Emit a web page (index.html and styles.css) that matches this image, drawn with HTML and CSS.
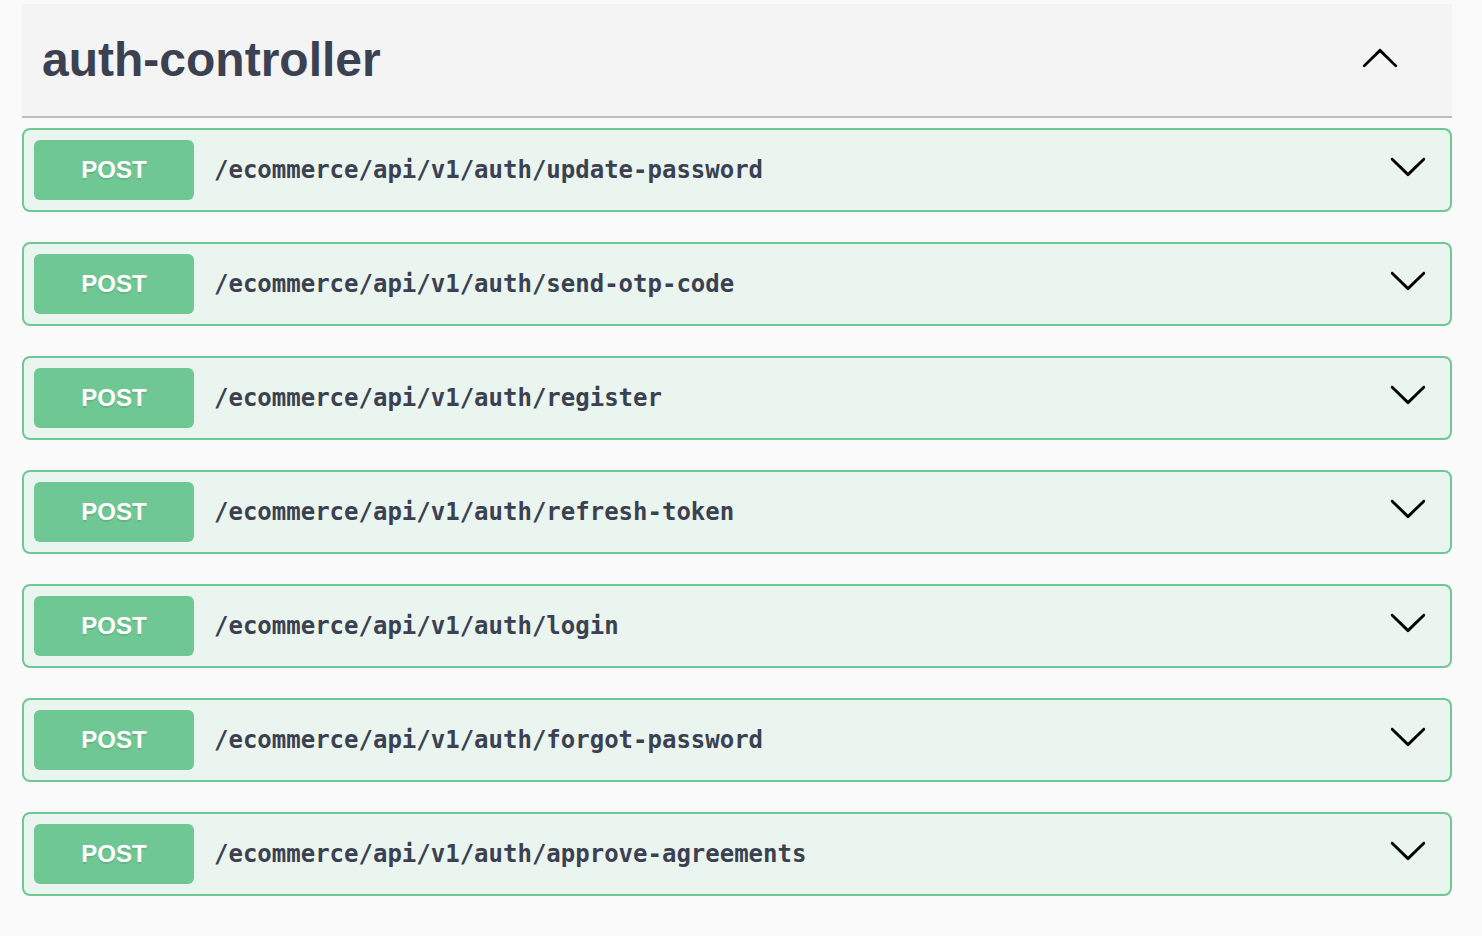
FILE: index.html
```html
<!DOCTYPE html>
<html lang="en">
<head>
<meta charset="utf-8">
<title>auth-controller</title>
<link rel="stylesheet" href="styles.css">
</head>
<body>
<section class="tag-section">
  <div class="tag-header">
    <h3 class="tag-title">auth-controller</h3>
    <svg class="arrow-up" width="40" height="40" viewBox="0 0 20 20" aria-hidden="true"><path d="M17.418 14.908c.272.268.709.268.979 0s.271-.701 0-.969l-7.908-7.83c-.27-.268-.707-.268-.979 0l-7.908 7.83c-.27.268-.27.701 0 .969.271.268.709.268.979 0L10 7.767l7.418 7.141z"/></svg>
  </div>
  <div class="ops">
    <div class="op">
      <span class="method">POST</span>
      <span class="path">/ecommerce/api/v1/auth/update-password</span>
      <svg class="arrow" width="40" height="40" viewBox="0 0 20 20" aria-hidden="true"><path d="M17.418 6.109c.272-.268.709-.268.979 0s.271.701 0 .969l-7.908 7.83c-.27.268-.707.268-.979 0l-7.908-7.83c-.27-.268-.27-.701 0-.969.271-.268.709-.268.979 0L10 13.25l7.418-7.141z"/></svg>
    </div>
    <div class="op">
      <span class="method">POST</span>
      <span class="path">/ecommerce/api/v1/auth/send-otp-code</span>
      <svg class="arrow" width="40" height="40" viewBox="0 0 20 20" aria-hidden="true"><path d="M17.418 6.109c.272-.268.709-.268.979 0s.271.701 0 .969l-7.908 7.83c-.27.268-.707.268-.979 0l-7.908-7.83c-.27-.268-.27-.701 0-.969.271-.268.709-.268.979 0L10 13.25l7.418-7.141z"/></svg>
    </div>
    <div class="op">
      <span class="method">POST</span>
      <span class="path">/ecommerce/api/v1/auth/register</span>
      <svg class="arrow" width="40" height="40" viewBox="0 0 20 20" aria-hidden="true"><path d="M17.418 6.109c.272-.268.709-.268.979 0s.271.701 0 .969l-7.908 7.83c-.27.268-.707.268-.979 0l-7.908-7.83c-.27-.268-.27-.701 0-.969.271-.268.709-.268.979 0L10 13.25l7.418-7.141z"/></svg>
    </div>
    <div class="op">
      <span class="method">POST</span>
      <span class="path">/ecommerce/api/v1/auth/refresh-token</span>
      <svg class="arrow" width="40" height="40" viewBox="0 0 20 20" aria-hidden="true"><path d="M17.418 6.109c.272-.268.709-.268.979 0s.271.701 0 .969l-7.908 7.83c-.27.268-.707.268-.979 0l-7.908-7.83c-.27-.268-.27-.701 0-.969.271-.268.709-.268.979 0L10 13.25l7.418-7.141z"/></svg>
    </div>
    <div class="op">
      <span class="method">POST</span>
      <span class="path">/ecommerce/api/v1/auth/login</span>
      <svg class="arrow" width="40" height="40" viewBox="0 0 20 20" aria-hidden="true"><path d="M17.418 6.109c.272-.268.709-.268.979 0s.271.701 0 .969l-7.908 7.83c-.27.268-.707.268-.979 0l-7.908-7.83c-.27-.268-.27-.701 0-.969.271-.268.709-.268.979 0L10 13.25l7.418-7.141z"/></svg>
    </div>
    <div class="op">
      <span class="method">POST</span>
      <span class="path">/ecommerce/api/v1/auth/forgot-password</span>
      <svg class="arrow" width="40" height="40" viewBox="0 0 20 20" aria-hidden="true"><path d="M17.418 6.109c.272-.268.709-.268.979 0s.271.701 0 .969l-7.908 7.83c-.27.268-.707.268-.979 0l-7.908-7.83c-.27-.268-.27-.701 0-.969.271-.268.709-.268.979 0L10 13.25l7.418-7.141z"/></svg>
    </div>
    <div class="op">
      <span class="method">POST</span>
      <span class="path">/ecommerce/api/v1/auth/approve-agreements</span>
      <svg class="arrow" width="40" height="40" viewBox="0 0 20 20" aria-hidden="true"><path d="M17.418 6.109c.272-.268.709-.268.979 0s.271.701 0 .969l-7.908 7.83c-.27.268-.707.268-.979 0l-7.908-7.83c-.27-.268-.27-.701 0-.969.271-.268.709-.268.979 0L10 13.25l7.418-7.141z"/></svg>
    </div>
  </div>
</section>
</body>
</html>
```

FILE: styles.css
```css
html, body {
  margin: 0;
  padding: 0;
  background: #fafafa;
}

body {
  padding: 4px 30px 0 22px;
  font-family: "Liberation Sans", Arial, sans-serif;
  color: #3b4151;
}

.tag-header {
  display: flex;
  align-items: center;
  height: 112px;
  padding: 0 52px 0 20px;
  background: #f4f4f4;
  border-bottom: 2px solid #bdbdbd;
}

.tag-title {
  flex: 1;
  margin: 0;
  font-family: "Liberation Sans", Arial, sans-serif;
  font-size: 48px;
  font-weight: 700;
  color: #3b4151;
  line-height: 1;
}

.arrow-up {
  display: block;
  margin-bottom: 6px;
  fill: #000;
}

.ops {
  display: flex;
  flex-direction: column;
  gap: 30px;
  padding-top: 10px;
}

.op {
  display: flex;
  align-items: center;
  height: 80px;
  padding: 0 10px;
  background: #ebf5ef;
  border: 2px solid #6fc794;
  border-radius: 8px;
}

.method {
  display: flex;
  align-items: center;
  justify-content: center;
  flex: 0 0 auto;
  width: 160px;
  height: 60px;
  border-radius: 6px;
  background: #6fc794;
  color: #fff;
  font-family: "Liberation Sans", Arial, sans-serif;
  font-size: 24px;
  font-weight: 700;
  text-shadow: 0 2px 0 rgba(0, 0, 0, 0.1);
}

.path {
  flex: 1;
  margin-left: 20px;
  font-family: "DejaVu Sans Mono", "Liberation Mono", monospace;
  font-size: 24px;
  font-weight: 700;
  color: #3b4151;
}

.arrow {
  display: block;
  flex: 0 0 auto;
  margin-right: 12px;
  margin-bottom: 8px;
  fill: #000;
}
```
